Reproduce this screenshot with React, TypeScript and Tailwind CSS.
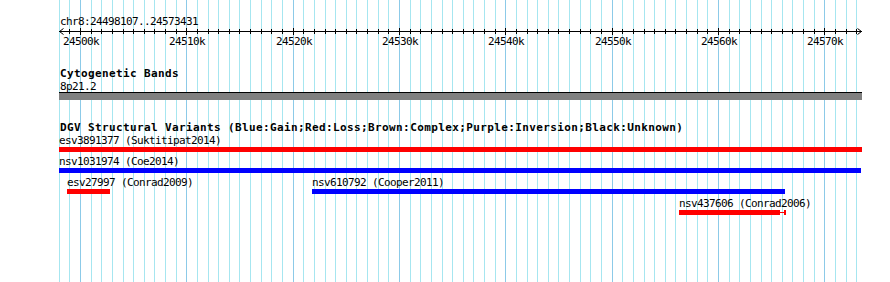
import React from "react";

const PX_PER_KB = 10.633;
const X = (bp: number) => 80 + ((bp - 24500000) / 1000) * PX_PER_KB;

const mono = "font-[family-name:'DejaVu_Sans_Mono',monospace] text-[11px] tracking-[-0.62px] text-black";
const bold = "font-[family-name:'DejaVu_Sans_Mono',monospace] text-[11px] font-bold tracking-[0.38px] text-black";

type Feat = { label: string; left: number; right: number; color: string; tail?: number };

const rows: Feat[][] = [
  [{ label: "esv3891377 (Suktitipat2014)", left: 59, right: 862, color: "bg-[#ff0000]" }],
  [{ label: "nsv1031974 (Coe2014)", left: 59, right: 861, color: "bg-[#0000ff]" }],
  [
    { label: "esv27997 (Conrad2009)", left: 67, right: 110, color: "bg-[#ff0000]" },
    { label: "nsv610792 (Cooper2011)", left: 312, right: 785, color: "bg-[#0000ff]" },
  ],
  [{ label: "nsv437606 (Conrad2006)", left: 679, right: 780, color: "bg-[#ff0000]", tail: 785 }],
];

function Grid() {
  const lines: React.ReactNode[] = [];
  for (let k = 24498; k <= 24573; k++) {
    const x = Math.round(X(k * 1000)) + 0.5;
    const major = k % 10 === 0;
    lines.push(
      <line key={k} x1={x} x2={x} y1={0} y2={282} stroke={major ? "#8ccae8" : "#a6e6f0"} strokeWidth={1} />
    );
  }
  return (
    <svg className="absolute inset-0" width={890} height={282}>
      {lines}
    </svg>
  );
}

function Ruler() {
  const ticks: React.ReactNode[] = [];
  for (let k = 24499; k <= 24573; k++) {
    const x = Math.round(X(k * 1000)) + 0.5;
    const major = k % 10 === 0;
    ticks.push(
      <line key={k} x1={x} x2={x} y1={major ? 0 : 1} y2={major ? 7 : 6} stroke="#000" strokeWidth={1} />
    );
  }
  return (
    <svg width={890} height={7} className="block">
      <line x1={59} x2={862} y1={3.5} y2={3.5} stroke="#000" strokeWidth={1} />
      <polyline points="63.5,0.5 59.5,3.5 63.5,6.5" fill="none" stroke="#000" strokeWidth={1} />
      <polyline points="857.5,0.5 861.5,3.5 857.5,6.5" fill="none" stroke="#000" strokeWidth={1} />
      {ticks}
    </svg>
  );
}

export default function App() {
  const majors = [24500, 24510, 24520, 24530, 24540, 24550, 24560, 24570];
  return (
    <div className="relative w-[890px] h-[282px] bg-white overflow-hidden">
      <Grid />
      <div className="relative flex flex-col pt-[15px]">
        <div className={`${mono} h-[13px] leading-[13px] pl-[60px] whitespace-nowrap`}>chr8:24498107..24573431</div>
        <Ruler />
        <div className="relative h-[13px]">
          {majors.map((k) => (
            <span
              key={k}
              className={`${mono} absolute top-0 w-[36px] text-center leading-[13px] whitespace-nowrap`}
              style={{ left: Math.round(X(k * 1000)) - 18 + 1 }}
            >
              {k}k
            </span>
          ))}
        </div>
        <div className={`${bold} mt-[20px] h-[13px] leading-[12px] pl-[60px] whitespace-nowrap`}>Cytogenetic Bands</div>
        <div className={`${mono} h-[11px] leading-[12px] pl-[60px] whitespace-nowrap`}>8p21.2</div>
        <div className="ml-[59px] w-[803px] h-[8px] border-t border-black bg-[#808080]" />
        <div className={`${bold} mt-[22px] h-[13px] leading-[12px] pl-[60px] whitespace-nowrap`}>
          DGV Structural Variants (Blue:Gain;Red:Loss;Brown:Complex;Purple:Inversion;Black:Unknown)
        </div>
        {rows.map((row, i) => (
          <div key={i} className="relative h-[21px]">
            {row.map((f) => (
              <div key={f.label} className="absolute top-0 flex flex-col" style={{ left: f.left }}>
                <span className={`${mono} h-[12px] leading-[12px] whitespace-nowrap`}>{f.label}</span>
                <div className="flex items-center h-[5px]">
                  <div className={`h-[5px] ${f.color}`} style={{ width: f.right - f.left }} />
                  {f.tail ? (
                    <>
                      <div className="h-[1px] bg-[#ff0000]" style={{ width: f.tail - f.right - 1 }} />
                      <div className="w-[2px] h-[5px] bg-[#ff0000]" />
                    </>
                  ) : null}
                </div>
              </div>
            ))}
          </div>
        ))}
      </div>
    </div>
  );
}
